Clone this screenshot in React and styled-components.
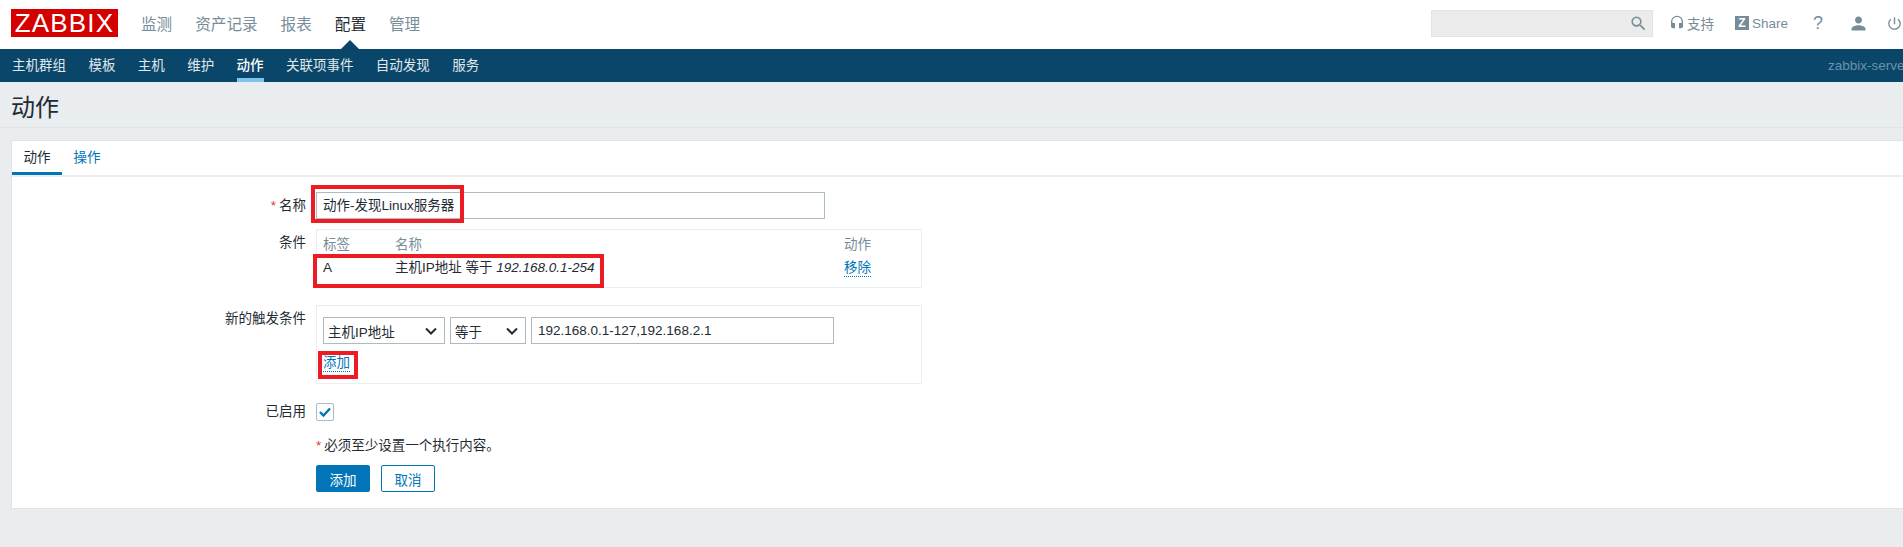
import React from 'react';
import styled, { createGlobalStyle } from 'styled-components';
import { MdSearch, MdHeadset, MdPerson, MdPowerSettingsNew } from 'react-icons/md';

const GlobalStyle = createGlobalStyle`
  html, body {
    margin: 0;
    padding: 0;
    height: 100%;
    overflow: hidden;
    background: #e9edf0;
  }
  * { box-sizing: border-box; }
`;

const Page = styled.div`
  width: 1925px;
  height: 547px;
  overflow: hidden;
  background: #e9edf0;
  color: #1f2c33;
  font-family: "Liberation Sans", "Noto Sans CJK SC", sans-serif;
  font-size: 13.5px;
`;

const TopBar = styled.header`
  height: 49px;
  background: #fff;
  display: flex;
  align-items: center;
  padding: 0 0 3px 11px;
`;

const Logo = styled.div`
  width: 107px;
  height: 28px;
  background: #d40000;
  color: #fff;
  font-size: 26px;
  line-height: 28px;
  letter-spacing: 1.2px;
  text-align: center;
`;

const MainMenu = styled.nav`
  display: flex;
  gap: 23px;
  margin-left: 23px;
  font-size: 15.6px;
`;

const MainItem = styled.a`
  position: relative;
  color: ${p => (p.$active ? '#1f2c33' : '#768d99')};
  ${p => p.$active && `
    &::after {
      content: "";
      position: absolute;
      left: 50%;
      top: 28px;
      margin-left: -10px;
      border-left: 10px solid transparent;
      border-right: 10px solid transparent;
      border-bottom: 10px solid #0a466a;
    }
  `}
`;

const TopTools = styled.div`
  margin-left: auto;
  display: flex;
  align-items: center;
  color: #768d99;
`;

const SearchBox = styled.div`
  width: 222px;
  height: 27px;
  background: #ebebeb;
  border: 1px solid #e3e3e3;
  display: flex;
  align-items: center;
  justify-content: flex-end;
  padding-right: 4px;
  font-size: 19px;
  color: #768d99;
  margin-right: 16px;
`;

const ToolLink = styled.a`
  display: flex;
  align-items: center;
  font-size: 13.5px;
  gap: ${p => p.$gap || 3}px;
  margin-right: ${p => p.$mr || 0}px;
  color: #768d99;
`;

const ZMark = styled.span`
  width: 14px;
  height: 14px;
  background: #768d99;
  color: #fff;
  font-size: 12px;
  font-weight: bold;
  line-height: 14px;
  text-align: center;
`;

const Help = styled.span`
  width: 10px;
  font-size: 18px;
  margin-right: 25px;
`;

const IconSlot = styled.span`
  display: flex;
  font-size: ${p => p.$size || 20}px;
  margin-right: ${p => p.$mr || 0}px;
`;

const SubBar = styled.nav`
  height: 33px;
  background: #0a466a;
  display: flex;
  align-items: stretch;
  padding-left: 12px;
  gap: 22.4px;
`;

const SubItem = styled.a`
  display: flex;
  align-items: center;
  height: 33px;
  padding-bottom: 4px;
  font-weight: ${p => (p.$active ? 500 : 'normal')};
  color: ${p => (p.$active ? '#fff' : '#e0e8ec')};
  ${p => p.$active && `box-shadow: inset 0 -4px 0 #7dc4ee;`}
`;

const ServerName = styled.span`
  margin-left: auto;
  margin-right: 16px;
  align-self: center;
  color: #6c93a8;
`;

const Title = styled.h1`
  margin: 0 0 12px;
  height: 46px;
  padding: 11px 0 0 11px;
  border-bottom: 1px solid #dfe4e7;
  font-size: 24px;
  line-height: 30px;
  font-weight: normal;
`;

const Card = styled.section`
  margin-left: 11px;
  height: 369px;
  background: #fff;
  border: 1px solid #dfe4e7;
  border-right: none;
`;

const Tabs = styled.div`
  height: 36px;
  display: flex;
  border-bottom: 2px solid #ebeef0;
`;

const Tab = styled.a`
  height: 34px;
  padding: 0 11.5px 5px;
  display: flex;
  align-items: center;
  color: ${p => (p.$active ? '#1f2c33' : '#0275b8')};
  ${p => p.$active && `box-shadow: inset 0 -3px 0 #0275b8;`}
`;

const FormRow = styled.div`
  display: grid;
  grid-template-columns: 304px auto;
  justify-content: start;
  margin-top: ${p => p.$mt || 0}px;
`;

const Label = styled.label`
  text-align: right;
  padding-right: 10px;
  line-height: ${p => p.$lh || 27}px;
`;

const Star = styled.span`
  color: #e33734;
  margin-right: 3px;
`;

const Field = styled.div`
  position: relative;
  grid-column: 2;
`;

const TextInput = styled.div`
  width: ${p => p.$w}px;
  height: 27px;
  padding-left: 6px;
  border: 1px solid #acbbc2;
  background: #fff;
  line-height: 25px;
  white-space: nowrap;
`;

const Panel = styled.div`
  width: 606px;
  height: ${p => p.$h}px;
  border: 1px solid #ebeef0;
  padding: ${p => p.$pad || '0 6px'};
`;

const CondGrid = styled.div`
  display: grid;
  grid-template-columns: 72px 449px auto;
  align-items: center;
`;

const HeadCell = styled.div`
  height: 24px;
  padding-top: 6px;
  line-height: 18px;
  color: #768d99;
`;

const BodyCell = styled.div`
  height: 33px;
  padding-top: 2px;
  line-height: 24px;
`;

const Dotted = styled.a`
  color: #0275b8;
  border-bottom: 1px dotted #0275b8;
  padding-bottom: 1px;
`;

const Selectors = styled.div`
  display: flex;
  gap: 5px;
`;

const SelectBox = styled.div`
  width: ${p => p.$w}px;
  height: 27px;
  border: 1px solid #acbbc2;
  padding: 0 4px;
  display: flex;
  align-items: center;
  justify-content: space-between;
`;

const Chevron = () => (
  <svg width="12" height="8" viewBox="0 0 12 8" fill="none" stroke="#1f2c33" strokeWidth="2" style={{ marginRight: 3 }}>
    <path d="M1 1.5l5 5 5-5" />
  </svg>
);

const AddLine = styled.div`
  margin-top: 10px;
  line-height: 18px;
`;

const CheckBox = styled.span`
  grid-column: 2;
  display: flex;
  align-items: center;
  justify-content: center;
  width: 18px;
  height: 18px;
  border: 1px solid #acbbc2;
  border-radius: 2px;
`;

const CheckMark = () => (
  <svg width="12" height="10" viewBox="0 0 12 10" fill="none" stroke="#0275b8" strokeWidth="2.4">
    <path d="M1 5l3.5 3.5L11 1.5" />
  </svg>
);

const Message = styled.div`
  grid-column: 2;
  line-height: 18px;
`;

const Buttons = styled.div`
  grid-column: 2;
  display: flex;
  gap: 11px;
`;

const Button = styled.button`
  height: 27px;
  width: 54px;
  padding: 0;
  border: 1px solid #0275b8;
  border-radius: 2px;
  background: ${p => (p.$primary ? '#0275b8' : '#fff')};
  color: ${p => (p.$primary ? '#fff' : '#0275b8')};
  font: inherit;
`;

// red boxes drawn over the screenshot
const Mark = styled.span`
  position: absolute;
  left: ${p => p.$l}px;
  top: ${p => p.$t}px;
  width: ${p => p.$w}px;
  height: ${p => p.$h}px;
  border: 4px solid #ed1c24;
  pointer-events: none;
`;

const mainItems = ['监测', '资产记录', '报表', '配置', '管理'];
const subItems = ['主机群组', '模板', '主机', '维护', '动作', '关联项事件', '自动发现', '服务'];

export default function App() {
  return (
    <Page>
      <GlobalStyle />
      <TopBar>
        <Logo>ZABBIX</Logo>
        <MainMenu>
          {mainItems.map(m => (
            <MainItem key={m} $active={m === '配置'}>{m}</MainItem>
          ))}
        </MainMenu>
        <TopTools>
          <SearchBox><MdSearch /></SearchBox>
          <ToolLink $mr={21} $gap={2}><MdHeadset size={16} />支持</ToolLink>
          <ToolLink $mr={25}><ZMark>Z</ZMark>Share</ToolLink>
          <Help>?</Help>
          <IconSlot $size={21} $mr={17}><MdPerson /></IconSlot>
          <IconSlot $size={17} $mr={22}><MdPowerSettingsNew /></IconSlot>
        </TopTools>
      </TopBar>

      <SubBar>
        {subItems.map(s => (
          <SubItem key={s} $active={s === '动作'}>{s}</SubItem>
        ))}
        <ServerName>zabbix-server</ServerName>
      </SubBar>

      <Title>动作</Title>

      <Card>
        <Tabs>
          <Tab $active>动作</Tab>
          <Tab>操作</Tab>
        </Tabs>

        <FormRow $mt={15}>
          <Label><Star>*</Star>名称</Label>
          <Field>
            <TextInput $w={509}>动作-发现Linux服务器</TextInput>
            <Mark $l={-5} $t={-7} $w={153} $h={38} />
          </Field>
        </FormRow>

        <FormRow $mt={10}>
          <Label $lh={28}>条件</Label>
          <Field>
            <Panel $h={59}>
              <CondGrid>
                <HeadCell>标签</HeadCell>
                <HeadCell>名称</HeadCell>
                <HeadCell>动作</HeadCell>
                <BodyCell>A</BodyCell>
                <BodyCell>主机IP地址 等于 <i>192.168.0.1-254</i></BodyCell>
                <BodyCell><Dotted>移除</Dotted></BodyCell>
              </CondGrid>
            </Panel>
            <Mark $l={-3} $t={25} $w={291} $h={34} />
          </Field>
        </FormRow>

        <FormRow $mt={17}>
          <Label $lh={28}>新的触发条件</Label>
          <Field>
            <Panel $h={79} $pad="11px 6px 0">
              <Selectors>
                <SelectBox $w={122}>主机IP地址<Chevron /></SelectBox>
                <SelectBox $w={76}>等于<Chevron /></SelectBox>
                <TextInput $w={303}>192.168.0.1-127,192.168.2.1</TextInput>
              </Selectors>
              <AddLine><Dotted>添加</Dotted></AddLine>
            </Panel>
            <Mark $l={2} $t={46} $w={40} $h={28} />
          </Field>
        </FormRow>

        <FormRow $mt={19}>
          <Label $lh={18}>已启用</Label>
          <CheckBox><CheckMark /></CheckBox>
        </FormRow>

        <FormRow $mt={16}>
          <Message><Star>*</Star>必须至少设置一个执行内容。</Message>
        </FormRow>

        <FormRow $mt={10}>
          <Buttons>
            <Button $primary>添加</Button>
            <Button>取消</Button>
          </Buttons>
        </FormRow>
      </Card>
    </Page>
  );
}
